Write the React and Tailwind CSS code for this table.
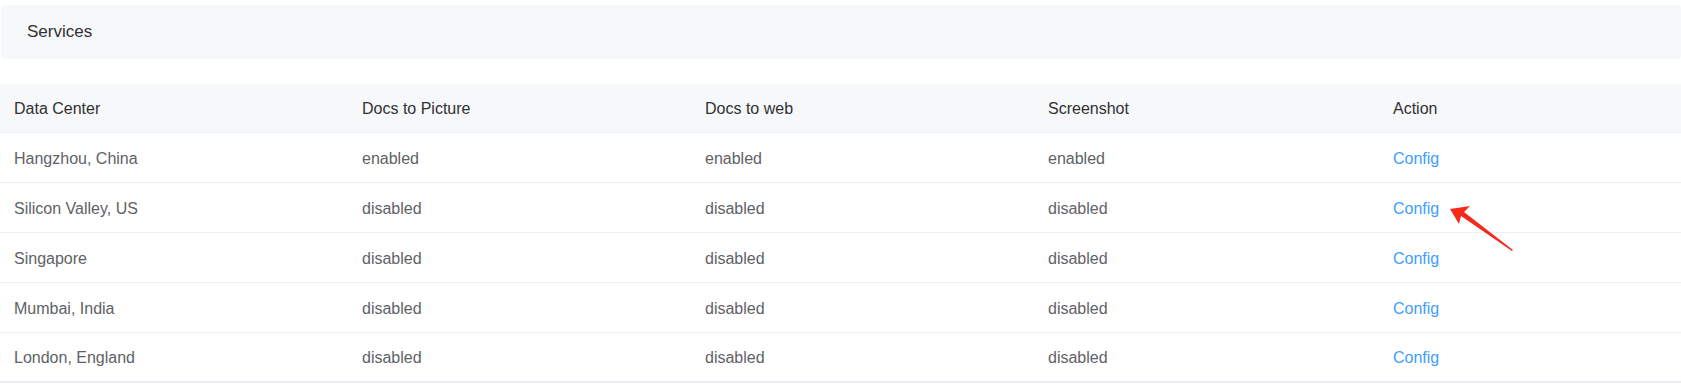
import React from "react";

const rows = [
  ["Hangzhou, China", "enabled", "enabled", "enabled"],
  ["Silicon Valley, US", "disabled", "disabled", "disabled"],
  ["Singapore", "disabled", "disabled", "disabled"],
  ["Mumbai, India", "disabled", "disabled", "disabled"],
  ["London, England", "disabled", "disabled", "disabled"],
];

const cols = "grid grid-cols-[348px_343px_343px_345px_1fr]";

export default function App() {
  return (
    <div
      className="relative w-full bg-white pt-[5px]"
      style={{ fontFamily: '"Liberation Sans", Arial, sans-serif' }}
    >
      <div className="ml-[1px] flex h-[54px] items-center rounded-[4px] bg-[#f7f8fa] pl-[26px] text-[17px] text-[#303133]">
        Services
      </div>
      <div className="mt-[25px] w-full text-[16px]">
        <div className={`${cols} h-[49px] items-center border-b border-[#ebeef5] bg-[#f7f8fa] pt-[2px] text-[#303133]`}>
          <div className="pl-[14px]">Data Center</div>
          <div className="pl-[14px]">Docs to Picture</div>
          <div className="pl-[14px]">Docs to web</div>
          <div className="pl-[14px]">Screenshot</div>
          <div className="pl-[14px]">Action</div>
        </div>
        {rows.map((r, i) => (
          <div
            key={i}
            className={`${cols} h-[50px] items-center border-b border-[#ebeef5] pt-[2px] text-[#606266] ${i === rows.length - 1 ? "border-b-2" : ""}`}
          >
            <div className="pl-[14px]">{r[0]}</div>
            <div className="pl-[14px]">{r[1]}</div>
            <div className="pl-[14px]">{r[2]}</div>
            <div className="pl-[14px]">{r[3]}</div>
            <div className="pl-[14px] text-[#409eff]">Config</div>
          </div>
        ))}
      </div>
      <svg
        className="pointer-events-none absolute left-[1440px] top-[200px]"
        width="80"
        height="56"
        viewBox="0 0 80 56"
      >
        <path d="M10 9 L30 6 L24 12 L73 50 L72 51 L21 16 L19 24 Z" fill="#f42a1d" />
      </svg>
    </div>
  );
}
